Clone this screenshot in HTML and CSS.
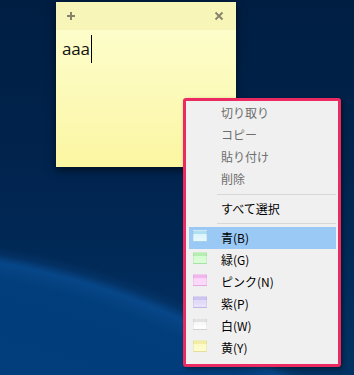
FILE: index.html
```html
<!DOCTYPE html>
<html lang="ja">
<head>
<meta charset="utf-8">
<link rel="stylesheet" href="styles.css">
</head>
<body>
<div class="desktop">
  <div class="note">
    <div class="note-head">
      <svg class="ico plus" width="10" height="10" viewBox="0 0 10 10"><path d="M5 1v8M1 5h8" stroke="#85836a" stroke-width="2"/></svg>
      <svg class="ico close" width="10" height="10" viewBox="0 0 10 10"><path d="M1.5 1.5l7 7M8.5 1.5l-7 7" stroke="#85836a" stroke-width="1.8"/></svg>
    </div>
    <div class="note-body"><span class="txt">aaa</span><span class="caret"></span></div>
  </div>

  <div class="menu">
    <div class="item disabled">切り取り</div>
    <div class="item disabled">コピー</div>
    <div class="item disabled">貼り付け</div>
    <div class="item disabled">削除</div>
    <div class="sep sep1"></div>
    <div class="item">すべて選択</div>
    <div class="sep sep2"></div>
    <div class="item active"><span class="sw sw-blue"></span>青(B)</div>
    <div class="item"><span class="sw sw-green"></span>緑(G)</div>
    <div class="item"><span class="sw sw-pink"></span>ピンク(N)</div>
    <div class="item"><span class="sw sw-purple"></span>紫(P)</div>
    <div class="item"><span class="sw sw-white"></span>白(W)</div>
    <div class="item"><span class="sw sw-yellow"></span>黄(Y)</div>
  </div>
</div>
</body>
</html>
```
FILE: styles.css
```css
html, body {
  margin: 0;
  padding: 0;
}
body {
  width: 354px;
  height: 375px;
  overflow: hidden;
  font-family: "Noto Sans CJK JP", "Noto Sans", sans-serif;
}
.desktop {
  position: relative;
  width: 354px;
  height: 375px;
  overflow: hidden;
  background:
    radial-gradient(ellipse 600px 395px at -150px 625px, rgba(0,0,0,0) 91%, rgba(15,85,160,0.35) 95%, rgba(0,0,0,0) 99%),
    radial-gradient(ellipse 600px 395px at -150px 625px, #013f80 0%, #013d7b 85%, #023e7b 95%, rgba(0,0,0,0) 97%),
    linear-gradient(180deg, #001e42 0%, #01234c 40%, #012b5a 75%, #023263 100%);
}
.note {
  position: absolute;
  left: 56px;
  top: 2px;
  width: 180px;
  height: 165px;
  display: flex;
  flex-direction: column;
  box-shadow: 0 3px 8px rgba(0,0,0,0.6);
}
.note-head {
  height: 28px;
  background: #f7f5b8;
  display: flex;
  align-items: center;
  justify-content: space-between;
  padding: 0 12px 0 10px;
}
.ico { display: block; }
.note-body {
  flex: 1;
  background: linear-gradient(180deg, #fdfdca 0%, #fcf9b4 60%, #fbf6a0 100%);
  padding: 5px 6px;
  display: flex;
  align-items: flex-start;
}
.txt {
  font-family: "Open Sans", "Noto Sans", sans-serif;
  font-size: 17px;
  line-height: 28px;
  color: #111;
  letter-spacing: -0.2px;
}
.caret {
  width: 1px;
  height: 28px;
  background: #000;
  margin-left: 1px;
}
.menu {
  position: absolute;
  left: 183px;
  top: 98px;
  width: 147px;
  height: 260px;
  padding: 1px 2px 2px 3px;
  background: #f0f0f0;
  border: 3px solid #eb2a61;
  border-radius: 3px;
  box-shadow: 2px 2px 4px rgba(0,0,0,0.4);
  display: flex;
  flex-direction: column;
  box-sizing: content-box;
}
.item {
  height: 22px;
  line-height: 22px;
  padding-left: 32px;
  font-size: 12px;
  font-weight: 400;
  color: #000;
  position: relative;
  flex: none;
}
.item.disabled { color: #6d6d6d; }
.item.active { background: #99c9f4; }
.sep {
  height: 1px;
  background: #d7d7d7;
  margin-left: 28px;
  flex: none;
}
.sep1 { margin-top: 4px; margin-bottom: 3px; }
.sep2 { margin-top: 3px; margin-bottom: 3px; }
.sw {
  position: absolute;
  left: 4px;
  top: 3px;
  width: 14px;
  height: 12px;
  box-sizing: border-box;
  border: 1px solid rgba(0,0,0,0.06);
}
.sw-blue   { background: linear-gradient(180deg, #aee0f3 0px, #aee0f3 3px, #dcf4fb 3px, #e6f8fd 100%); }
.sw-green  { background: linear-gradient(180deg, #b4eeb0 0px, #b4eeb0 3px, #d4fbd0 3px, #dcfcd8 100%); }
.sw-pink   { background: linear-gradient(180deg, #f1b6ee 0px, #f1b6ee 3px, #fbd4f8 3px, #fcdcfa 100%); }
.sw-purple { background: linear-gradient(180deg, #cfc3f1 0px, #cfc3f1 3px, #e0d8f8 3px, #e9e3fb 100%); }
.sw-white  { background: linear-gradient(180deg, #e2e2e2 0px, #e2e2e2 3px, #f6f6f6 3px, #ffffff 100%); }
.sw-yellow { background: linear-gradient(180deg, #f3eea6 0px, #f3eea6 3px, #fcfbc6 3px, #fdfcd0 100%); }
```
